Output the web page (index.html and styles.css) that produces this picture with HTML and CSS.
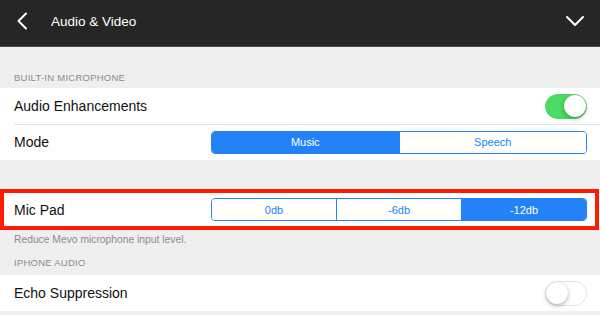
FILE: index.html
```html
<!DOCTYPE html>
<html>
<head>
<meta charset="utf-8">
<link rel="stylesheet" href="styles.css">
</head>
<body>
<div class="screen">
  <header class="nav">
    <div class="nav-left">
      <svg class="back" width="12" height="18" viewBox="0 0 12 18"><path d="M10 1.5 L2.5 9 L10 16.5" fill="none" stroke="#fff" stroke-width="2" stroke-linecap="round" stroke-linejoin="round"/></svg>
      <span class="title">Audio &amp; Video</span>
    </div>
    <svg class="down" width="20" height="12" viewBox="0 0 20 12"><path d="M2 2 L10 10 L18 2" fill="none" stroke="#fff" stroke-width="2" stroke-linecap="round" stroke-linejoin="round"/></svg>
  </header>

  <div class="section-head">BUILT-IN MICROPHONE</div>
  <div class="group">
    <div class="row">
      <span class="label">Audio Enhancements</span>
      <span class="toggle on"><span class="knob"></span></span>
    </div>
    <div class="row sep">
      <span class="label">Mode</span>
      <div class="seg">
        <span class="seg-item active">Music</span>
        <span class="seg-item">Speech</span>
      </div>
    </div>
  </div>

  <div class="group highlighted">
    <div class="row">
      <span class="label">Mic Pad</span>
      <div class="seg">
        <span class="seg-item">0db</span>
        <span class="seg-item">-6db</span>
        <span class="seg-item active">-12db</span>
      </div>
    </div>
  </div>
  <div class="section-foot">Reduce Mevo microphone input level.</div>

  <div class="section-head second">IPHONE AUDIO</div>
  <div class="group">
    <div class="row">
      <span class="label">Echo Suppression</span>
      <span class="toggle"><span class="knob"></span></span>
    </div>
  </div>
</div>
</body>
</html>
```

FILE: styles.css
```css
* { box-sizing: border-box; }
html, body { margin: 0; padding: 0; }
body {
  width: 600px;
  height: 315px;
  overflow: hidden;
  background: #efeff0;
  font-family: "Liberation Sans", Arial, sans-serif;
}
.screen { display: flex; flex-direction: column; }

.nav {
  height: 47px;
  background: #262626;
  border-bottom: 1px solid #4a4a4a;
  display: flex;
  align-items: center;
  justify-content: space-between;
  padding: 0 15px 0 16px;
}
.nav-left { display: flex; align-items: center; gap: 23px; }
.back { display: block; margin-top: -4px; }
.title { color: #fff; font-size: 13.5px; margin-top: -4px; }
.down { display: block; margin-top: -5px; }

.section-head {
  padding: 25px 14px 5px;
  font-size: 9.5px;
  color: #8b8b8f;
  letter-spacing: 0.25px;
  height: 41px;
  display: flex;
  align-items: flex-end;
}
.section-head.second { padding-top: 0; height: 28px; padding-bottom: 7px; }
.section-foot {
  padding: 4px 14px 0;
  font-size: 10.3px;
  color: #8b8b8f;
  height: 17px;
}

.group { background: #fff; }
.group + .group { margin-top: 29px; }
.row {
  height: 36px;
  display: flex;
  align-items: center;
  justify-content: space-between;
  padding: 0 13px 0 14px;
  position: relative;
}
.row.sep::before {
  content: "";
  position: absolute;
  left: 14px; right: 0; top: 0;
  height: 1px;
  background: #e6e6e8;
}
.label { font-size: 14px; color: #111; }

.highlighted .row {
  height: 41px;
  border: 4px solid #ff1a00;
  padding: 0 8px 0 10px;
  margin-right: 1px;
}

.seg {
  width: 376px;
  height: 23px;
  border: 1px solid #2382f7;
  border-radius: 4px;
  display: flex;
  overflow: hidden;
}
.seg-item {
  flex: 1;
  display: flex;
  align-items: center;
  justify-content: center;
  font-size: 11px;
  color: #2382f7;
  background: #fff;
}
.seg-item + .seg-item { border-left: 1px solid #2382f7; }
.seg-item.active { background: #2382f7; color: #fff; }

.toggle {
  width: 42px;
  height: 25px;
  border-radius: 13px;
  background: #fff;
  border: 1.5px solid #e4e4e6;
  position: relative;
  display: block;
}
.toggle .knob {
  position: absolute;
  top: 0; left: 0;
  width: 22px; height: 22px;
  border-radius: 50%;
  background: #fff;
  box-shadow: 0 2px 4px rgba(0,0,0,0.25), 0 0 1px rgba(0,0,0,0.2);
}
.toggle.on { background: #4cd964; border-color: #4cd964; }
.toggle.on .knob { left: auto; right: 0; }
```
